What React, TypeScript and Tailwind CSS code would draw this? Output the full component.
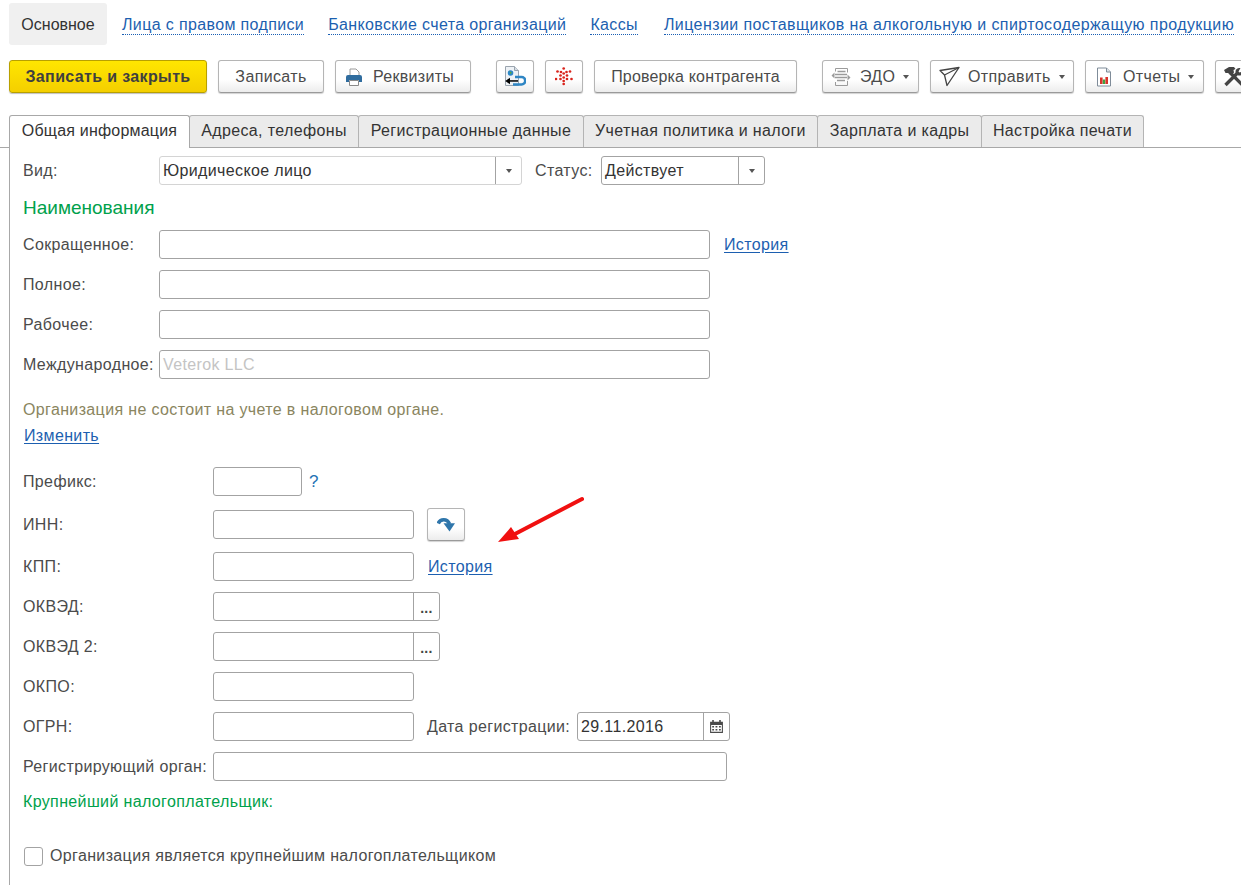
import type { ReactNode } from 'react'

const borderGray = 'border-[#a3a3a3]'

function Field({ w, value, hint, btn, btnW = 26 }: { w: string; value?: string; hint?: string; btn?: ReactNode; btnW?: number }) {
  return (
    <div className={`flex h-[29px] shrink-0 rounded-[3px] border ${borderGray} bg-white ${w}`}>
      <div className={`flex-1 truncate pl-[3px] text-[16px] leading-[27px] ${hint ? 'text-[#c4c4c4]' : 'text-[#333]'}`}>{value ?? hint}</div>
      {btn && (
        <div className={`flex items-center justify-center border-l ${borderGray}`} style={{ width: btnW }}>
          {btn}
        </div>
      )}
    </div>
  )
}

function Row({ label, labelW, mb = 'mb-[11px]', children }: { label: string; labelW: string; mb?: string; children?: ReactNode }) {
  return (
    <div className={`flex h-[29px] items-center ${mb}`}>
      <div className={`shrink-0 text-[16px] text-[#4b4b4b] ${labelW}`}>{label}</div>
      {children}
    </div>
  )
}

function ToolBtn({ w, children, className = '' }: { w: string; children: ReactNode; className?: string }) {
  return (
    <button className={`flex h-[33px] shrink-0 items-center rounded-[3px] border border-[#b5b5b5] border-b-[#9a9a9a] bg-gradient-to-b from-white from-60% to-[#ececec] text-[16px] text-[#4b4b4b] shadow-[0_1px_1px_rgba(0,0,0,0.18)] ${w} ${className}`}>
      {children}
    </button>
  )
}

function Caret({ className = '' }: { className?: string }) {
  return <span className={`inline-block h-0 w-0 border-x-[3px] border-t-[4px] border-x-transparent border-t-[#555] ${className}`} />
}

function PrinterIcon() {
  return (
    <svg width="18" height="18" viewBox="0 0 18 18">
      <path d="M5 1h6l3 3v4H5z" fill="#fff" stroke="#9a9a9a" />
      <path d="M1 9a2 2 0 0 1 2-2h12a2 2 0 0 1 2 2v5h-3v-2H4v2H1z" fill="#2f6c9e" />
      <path d="M4.5 12.5h9v5h-9z" fill="#fff" stroke="#8a8a8a" />
    </svg>
  )
}

function DocArrowIcon() {
  return (
    <svg width="22" height="23" viewBox="0 0 22 23">
      <path d="M1.5 1.5h9l4 4v15h-13z" fill="#eef2f6" stroke="#9aa4ae" />
      <path d="M10.5 1.5v4h4" fill="#d5dde4" stroke="#9aa4ae" />
      <circle cx="6.5" cy="8" r="2.8" fill="#2b87c9" />
      <path d="M5.5 6.3l2.2 1-1 2.3z" fill="#5ba93c" />
      <path d="M11 12h6.5a3.2 3.2 0 0 1 0 7.5H9" fill="none" stroke="#2f86c4" strokeWidth="2.6" />
      <path d="M3 15.2h11v1.5H3z" fill="#000" />
      <path d="M6 12.8v6.4L1.2 16z" fill="#000" />
    </svg>
  )
}

function DotsIcon() {
  const dots = [
    [8.7, 1.5], [2.5, 4.5], [15, 4.5], [6, 5], [11.5, 5], [8.7, 6.5], [5.5, 8.5], [12, 8.5], [1, 12], [16.5, 12],
    [8.7, 10.5], [5.5, 12], [12, 12], [8.7, 14], [8.7, 17],
  ]
  return (
    <svg width="18" height="19" viewBox="0 0 18 19">
      {dots.map(([x, y]) => (
        <circle key={`${x}-${y}`} cx={x} cy={y} r="1.35" fill="#d9241c" />
      ))}
    </svg>
  )
}

function EdoIcon() {
  return (
    <svg width="20" height="20" viewBox="0 0 20 20" fill="none" stroke="#9b9b9b">
      <path d="M4.5 1.5h12v4M4.5 1.5v3M16.5 14v4.5h-12V15" />
      <path d="M6.5 4.5h8M4 7.5h12M4 10.5h12M6 13.5h8" strokeWidth="1.5" />
      <path d="M0.5 8.5l3-3v6zM19.5 10.5l-3-3v6z" fill="#9b9b9b" stroke="none" />
    </svg>
  )
}

function SendIcon() {
  return (
    <svg width="21" height="21" viewBox="0 0 21 21" fill="none" stroke="#444" strokeWidth="1.3" strokeLinejoin="round">
      <path d="M1 4.5L20 1.5 8 19.5 5.5 9z" />
      <path d="M5.5 9L20 1.5" />
    </svg>
  )
}

function ReportIcon() {
  return (
    <svg width="16" height="20" viewBox="0 0 16 20">
      <path d="M1.5 1h9l4 4v14h-13z" fill="#fff" stroke="#7f8c99" />
      <path d="M10.5 1v4h4" fill="#dfe5ea" stroke="#7f8c99" />
      <rect x="4" y="10.5" width="2.6" height="6.5" fill="#d9332b" />
      <rect x="6.8" y="12.5" width="2.4" height="4.5" fill="#3ea23e" />
      <rect x="9.4" y="10" width="2.6" height="7" fill="#d9332b" />
    </svg>
  )
}

function ToolsIcon() {
  return (
    <svg width="22" height="22" viewBox="0 0 22 22" fill="#444">
      <path d="M8 6.5L20 18.5" stroke="#444" strokeWidth="3.2" fill="none" />
      <path d="M15 7.5L3.5 19" stroke="#444" strokeWidth="3.4" fill="none" />
      <path d="M2 4l5-3h5l1.5 2-2 1 .5 2.5-3 3L6 7 3.5 7z" />
      <path d="M21 2.5l-1 3-2.5 1-1-1 2-3.5c-2.5-.5-5 1-5 3.5 0 1.5 1 3.5 3 4s4.5-1 5-3.5c.2-1.2 0-2.5-.5-3.5z" />
    </svg>
  )
}

function CurveArrowIcon() {
  return (
    <svg width="18" height="15" viewBox="0 0 18 15">
      <path d="M1.2 6.5C3 1.8 10 1 12.5 7" fill="none" stroke="#2f76ab" strokeWidth="3.6" />
      <path d="M6.5 6.3H18L12.5 14.5z" fill="#2f76ab" />
    </svg>
  )
}

function CalendarIcon() {
  return (
    <svg width="13" height="15" viewBox="0 0 12 14" fill="#4a4a4a">
      <path d="M0 2.5h2V1h1.5v1.5h5V1H10v1.5h2V13H0zM1 5.5V12h10V5.5z" />
      <path d="M2 6.5h1.7v1.5H2zM5.1 6.5h1.7v1.5H5.1zM8.3 6.5H10v1.5H8.3zM2 9.3h1.7v1.5H2zM5.1 9.3h1.7v1.5H5.1zM8.3 9.3H10v1.5H8.3z" />
    </svg>
  )
}

function DottedLink({ children, className = '' }: { children: ReactNode; className?: string }) {
  return (
    <a className={`border-b border-dotted border-[#1a5fb4] text-[16px] leading-[18px] text-[#1c5fb0] ${className}`}>{children}</a>
  )
}

function PlainLink({ children, className = '' }: { children: ReactNode; className?: string }) {
  return <a className={`text-[16px] text-[#1c5fb0] underline underline-offset-2 ${className}`}>{children}</a>
}

const tabs = [
  { name: 'Адреса, телефоны', w: 'w-[170px]' },
  { name: 'Регистрационные данные', w: 'w-[226px]' },
  { name: 'Учетная политика и налоги', w: 'w-[235px]' },
  { name: 'Зарплата и кадры', w: 'w-[165px]' },
  { name: 'Настройка печати', w: 'w-[163px]' },
]

export default function App() {
  return (
    <div className="relative h-[889px] w-[1241px] overflow-hidden bg-white font-['Liberation_Sans',Arial,sans-serif] text-[16px] tracking-[0.36px] text-[#4b4b4b]">
      {/* верхнее меню */}
      <nav className="flex h-[60px] items-start pl-[9px] pt-[3px] whitespace-nowrap">
        <div className="flex h-[42px] w-[98px] items-center justify-center rounded-[3px] bg-[#f0f0f0] pt-[2px] tracking-normal text-[#333]">Основное</div>
        <div className="ml-[15px] flex h-[42px] items-center pt-[2px]">
          <DottedLink>Лица с правом подписи</DottedLink>
          <DottedLink className="ml-[24px]">Банковские счета организаций</DottedLink>
          <DottedLink className="ml-[24px]">Кассы</DottedLink>
          <DottedLink className="ml-[26px] tracking-[0.41px]">Лицензии поставщиков на алкогольную и спиртосодержащую продукцию</DottedLink>
        </div>
      </nav>

      {/* панель команд */}
      <div className="flex h-[33px] w-[1300px] pl-[9px] whitespace-nowrap">
        <button className="flex h-[33px] w-[198px] shrink-0 items-center justify-center rounded-[3px] border border-[#b8a000] bg-gradient-to-b from-[#ffe600] to-[#f4cf00] text-[16px] font-bold tracking-[0.36px] text-[#3f3f3f] shadow-[0_1px_1px_rgba(0,0,0,0.25)]">
          Записать и закрыть
        </button>
        <ToolBtn w="w-[106px] ml-[11px]" className="justify-center tracking-[0.36px]">Записать</ToolBtn>
        <ToolBtn w="w-[136px] ml-[11px]" className="pl-[9px] tracking-[0.3px]">
          <PrinterIcon />
          <span className="ml-[10px]">Реквизиты</span>
        </ToolBtn>
        <ToolBtn w="w-[38px] ml-[25px]" className="justify-center"><DocArrowIcon /></ToolBtn>
        <ToolBtn w="w-[38px] ml-[11px]" className="justify-center"><DotsIcon /></ToolBtn>
        <ToolBtn w="w-[203px] ml-[11px]" className="justify-center tracking-[0.16px]">Проверка контрагента</ToolBtn>
        <ToolBtn w="w-[97px] ml-[25px]" className="pl-[8px] tracking-[0.36px]">
          <EdoIcon />
          <span className="ml-[9px]">ЭДО</span>
          <Caret className="ml-[8px]" />
        </ToolBtn>
        <ToolBtn w="w-[144px] ml-[11px]" className="pl-[8px] tracking-[0.36px]">
          <SendIcon />
          <span className="ml-[8px]">Отправить</span>
          <Caret className="ml-[8px]" />
        </ToolBtn>
        <ToolBtn w="w-[119px] ml-[11px]" className="pl-[10px] tracking-[0.36px]">
          <ReportIcon />
          <span className="ml-[11px]">Отчеты</span>
          <Caret className="ml-[8px]" />
        </ToolBtn>
        <ToolBtn w="w-[38px] ml-[11px]" className="pl-[6px]"><ToolsIcon /></ToolBtn>
      </div>

      {/* вкладки */}
      <div className="mt-[22px] flex h-[33px] border-b border-[#a8a8a8] pl-[9px] whitespace-nowrap">
        <div className="z-10 flex h-[33px] w-[181px] items-center justify-center rounded-t-[3px] border border-b-0 border-[#a8a8a8] bg-white pb-[2px] tracking-[0.2px] text-[#333]">
          Общая информация
        </div>
        {tabs.map((t) => (
          <div key={t.name} className={`-ml-px flex h-[32px] items-center justify-center rounded-t-[3px] border border-b-0 border-[#b4b4b4] bg-[#ebebeb] pb-[2px] text-[#333] ${t.w}`}>
            {t.name}
          </div>
        ))}
      </div>

      {/* форма */}
      <div className="ml-[9px] h-[737px] border-l border-[#a8a8a8] pl-[13px] pt-[8px] whitespace-nowrap">
        <div className="flex h-[29px] items-center">
          <div className="w-[136px] shrink-0">Вид:</div>
          <Field w="w-[363px] border-[#d4d4d4]" value="Юридическое лицо" btn={<Caret />} />
          <div className="ml-[13px] w-[66px]">Статус:</div>
          <Field w="w-[164px]" value="Действует" btn={<Caret />} />
        </div>

        <div className="mt-[11px] h-[34px] text-[19px] leading-[24px] tracking-normal text-[#00a14b]">Наименования</div>

        <Row label="Сокращенное:" labelW="w-[136px]">
          <Field w="w-[551px]" />
          <PlainLink className="ml-[14px]">История</PlainLink>
        </Row>
        <Row label="Полное:" labelW="w-[136px]"><Field w="w-[551px]" /></Row>
        <Row label="Рабочее:" labelW="w-[136px]"><Field w="w-[551px]" /></Row>
        <Row label="Международное:" labelW="w-[136px]"><Field w="w-[551px]" hint="Veterok LLC" /></Row>

        <div className="mt-[21px] h-[20px] leading-[20px] text-[#8a8560]">Организация не состоит на учете в налоговом органе.</div>
        <div className="mt-[4px] h-[22px] pl-px"><PlainLink>Изменить</PlainLink></div>

        <div className="mt-[21px]">
          <Row label="Префикс:" labelW="w-[190px]" mb="mb-[14px]">
            <Field w="w-[89px]" />
            <span className="ml-[7px] text-[17px] text-[#2272b5]">?</span>
          </Row>
          <Row label="ИНН:" labelW="w-[190px]" mb="mb-[13px]">
            <Field w="w-[201px]" />
            <ToolBtn w="w-[38px] ml-[13px]" className="justify-center"><CurveArrowIcon /></ToolBtn>
          </Row>
          <Row label="КПП:" labelW="w-[190px]">
            <Field w="w-[201px]" />
            <PlainLink className="ml-[14px]">История</PlainLink>
          </Row>
          <Row label="ОКВЭД:" labelW="w-[190px]">
            <Field w="w-[227px]" btn={<span className="pt-[3px] text-[14px] font-bold leading-[14px] text-[#444]">...</span>} />
          </Row>
          <Row label="ОКВЭД 2:" labelW="w-[190px]">
            <Field w="w-[227px]" btn={<span className="pt-[3px] text-[14px] font-bold leading-[14px] text-[#444]">...</span>} />
          </Row>
          <Row label="ОКПО:" labelW="w-[190px]"><Field w="w-[201px]" /></Row>
          <Row label="ОГРН:" labelW="w-[190px]">
            <Field w="w-[201px]" />
            <div className="ml-[13px] w-[150px] shrink-0">Дата регистрации:</div>
            <Field w="w-[153px]" value="29.11.2016" btn={<CalendarIcon />} />
          </Row>
          <Row label="Регистрирующий орган:" labelW="w-[190px]"><Field w="w-[514px]" /></Row>
        </div>

        <div className="h-[20px] leading-[20px] text-[#00a14b]">Крупнейший налогоплательщик:</div>
        <div className="mt-[34px] flex h-[20px] items-center">
          <span className="ml-px h-[19px] w-[19px] rounded-[3px] border border-[#a3a3a3] bg-white" />
          <span className="ml-[7px]">Организация является крупнейшим налогоплательщиком</span>
        </div>
      </div>

      {/* красная стрелка поверх формы */}
      <svg className="absolute left-[495px] top-[492px]" width="95" height="55" viewBox="0 0 95 55">
        <path d="M87 7L18 43" stroke="#f01010" strokeWidth="4" strokeLinecap="round" />
        <path d="M3 50L16 35L24 47z" fill="#f01010" />
      </svg>
    </div>
  )
}
